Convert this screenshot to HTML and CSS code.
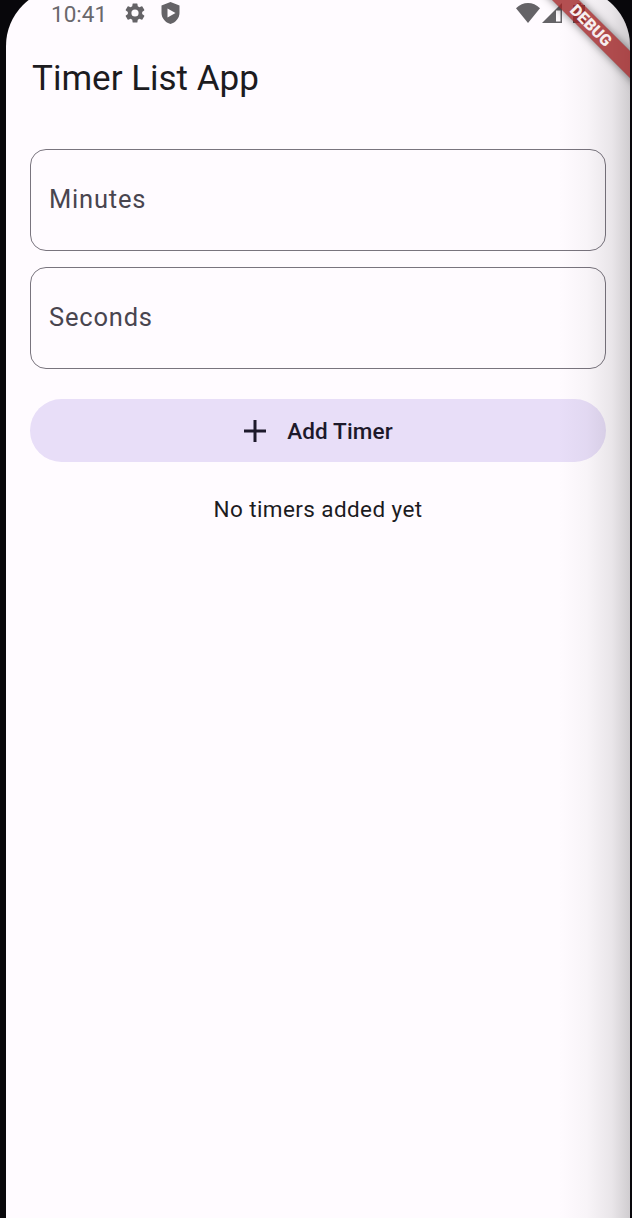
FILE: index.html
```html
<!DOCTYPE html>
<html lang="en">
<head>
<meta charset="utf-8">
<title>Timer List App</title>
<link rel="stylesheet" href="styles.css">
</head>
<body>
<div class="screen">
  <header class="status">
    <span class="clock">10:41</span>
    <svg class="gear" viewBox="2 2 20 20"><path fill-rule="evenodd" d="M19.14 12.94c.04-.3.06-.61.06-.94s-.02-.64-.07-.94l2.03-1.58a.49.49 0 0 0 .12-.61l-1.92-3.32a.49.49 0 0 0-.59-.22l-2.39.96a7 7 0 0 0-1.62-.94l-.36-2.54a.48.48 0 0 0-.48-.41h-3.84a.48.48 0 0 0-.47.41l-.36 2.54a7 7 0 0 0-1.62.94l-2.39-.96a.48.48 0 0 0-.59.22L2.74 8.87a.48.48 0 0 0 .12.61l2.03 1.58a6 6 0 0 0 0 1.88l-2.03 1.58a.49.49 0 0 0-.12.61l1.92 3.32c.12.22.37.29.59.22l2.39-.96c.5.38 1.03.7 1.62.94l.36 2.54c.05.24.24.41.48.41h3.84c.24 0 .44-.17.47-.41l.36-2.54a7 7 0 0 0 1.62-.94l2.39.96c.22.08.47 0 .59-.22l1.92-3.32a.48.48 0 0 0-.12-.61zM12 15.6a3.6 3.6 0 1 1 0-7.2 3.6 3.6 0 0 1 0 7.2z"/></svg>
    <svg class="shield" viewBox="0 0 18 22"><path fill-rule="evenodd" d="M9 0 0 3.4V11c0 5 3.8 9.600 9 11 5.200-1.400 9-6 9-11V3.400zM6 6.500v9l8-4.500z"/></svg>
    <span class="gap"></span>
    <svg class="wifi" viewBox="0 0 24 20"><path d="M12 20 0 5.200C7-1.700 17-1.700 24 5.200z"/></svg>
    <svg class="signal" viewBox="0 0 20 20"><path fill-rule="evenodd" d="M20 0v20H0zM14 7.500V18.500h4.500V7.500z"/></svg>
    <svg class="battery" viewBox="0 0 12 20"><path fill-rule="evenodd" d="M4 0h4v2h4v18H0V2h4zM6.500 5 3 12h2.500v5L9.300 10H6.500z"/></svg>
  </header>
  <h1 class="title">Timer List App</h1>
  <main class="content">
    <div class="field">Minutes</div>
    <div class="field">Seconds</div>
    <div class="add"><svg class="plus" viewBox="0 0 24 24"><path d="M12 1v22M1 12h22"/></svg><span>Add Timer</span></div>
    <p class="empty">No timers added yet</p>
  </main>
  <div class="shade"></div>
  <div class="banner">DEBUG</div>
</div>
</body>
</html>
```

FILE: styles.css
```css
body {
  margin: 0;
  height: 1218px;
  overflow: hidden;
  background: #08070b;
  font-family: Roboto, sans-serif;
}
.screen {
  position: relative;
  box-sizing: border-box;
  width: 624px;
  height: 1230px;
  margin: -12px 0 0 6px;
  padding-top: 12px;
  border-radius: 58px 58px 0 0;
  overflow: hidden;
  background: #fffbff;
}
.status {
  display: flex;
  height: 26px;
  align-items: center;
  padding: 0 45px;
  fill: #656367;
}
.clock {
  width: 74px;
  font-size: 22.500px;
  line-height: 28px;
  margin-top: 2px;
  color: #6a686c;
}
.gear { width: 20px; height: 20px; margin-right: 16px; }
.shield { width: 19px; height: 22px; }
.gap { flex: 1; }
.wifi { width: 24px; height: 20px; margin-right: 2px; }
.signal { width: 20px; height: 20px; margin-right: 11px; }
.battery { width: 12px; height: 20px; }
.title {
  margin: 0;
  padding: 32px 0 0 26px;
  font-size: 35px;
  line-height: 42px;
  font-weight: 400;
  color: #1c1b1f;
}
.content {
  display: flex;
  flex-direction: column;
  padding: 49px 24px 0;
}
.field {
  box-sizing: border-box;
  height: 102px;
  margin-bottom: 16px;
  padding-left: 18px;
  border: 1.500px solid #79747e;
  border-radius: 16px;
  font-size: 25.500px;
  letter-spacing: 0.800px;
  line-height: 99px;
  color: #49454f;
}
.add {
  display: flex;
  align-items: center;
  justify-content: center;
  gap: 20px;
  height: 63px;
  margin-top: 14px;
  border-radius: 32px;
  background: #e8def8;
  font-size: 22.500px;
  font-weight: 500;
  letter-spacing: 0.150px;
  color: #1d192b;
}
.plus {
  width: 24px;
  height: 24px;
  fill: none;
  stroke: #1d192b;
  stroke-width: 3;
}
.empty {
  margin: 33px 0 0;
  text-align: center;
  font-size: 22.500px;
  line-height: 28px;
  letter-spacing: 0.400px;
  color: #1c1b1f;
}
.shade {
  position: absolute;
  inset: 0 0 0 auto;
  width: 72px;
  background: linear-gradient(90deg, rgba(40,40,40,0), rgba(40,40,40,0.030) 40%, rgba(40,40,40,0.100) 75%, rgba(40,40,40,0.220));
}
.banner {
  position: absolute;
  left: 485px;
  top: 28px;
  width: 200px;
  height: 19px;
  transform: rotate(45deg);
  background: rgba(160,36,38,0.800);
  box-shadow: 0 0 9px rgba(0,0,0,0.500);
  text-align: center;
  font-size: 16px;
  font-weight: 900;
  line-height: 19px;
  color: #f7eeee;
}
```
